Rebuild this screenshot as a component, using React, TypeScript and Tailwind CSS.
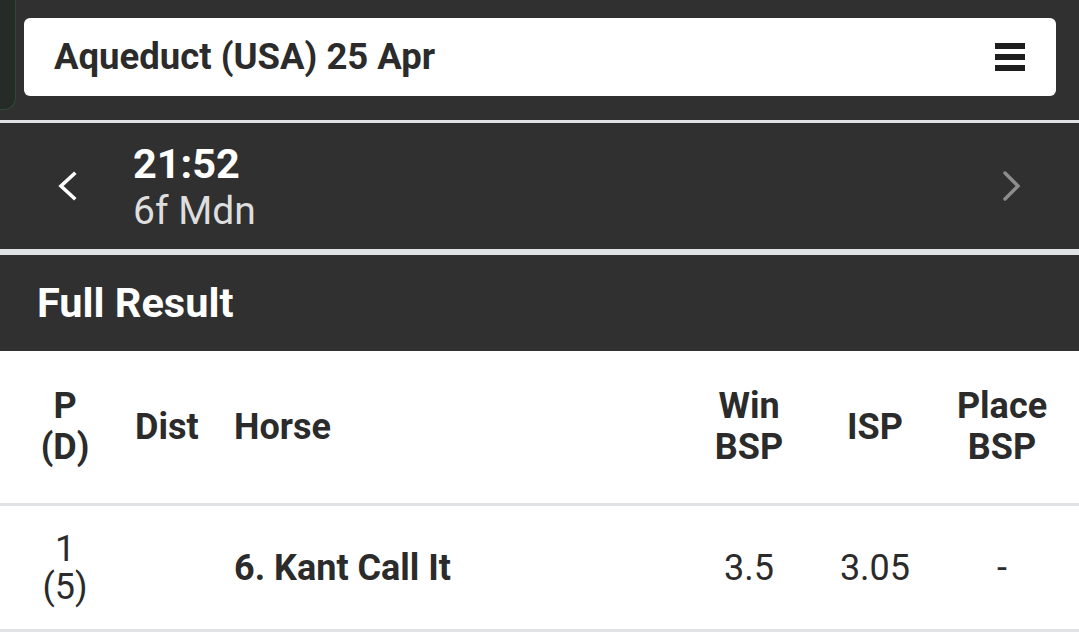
import React from 'react';

const font = { fontFamily: 'Roboto, "Noto Sans", sans-serif' };

const ChevronLeft = () => (
  <svg width="24" height="30" viewBox="0 0 24 30" fill="none">
    <path d="M19 3 L6 15 L19 27" stroke="#ffffff" strokeWidth="3.6" strokeLinecap="square" />
  </svg>
);

const ChevronRight = () => (
  <svg width="22" height="32" viewBox="0 0 22 32" fill="none">
    <path d="M4 3 L17 16 L4 29" stroke="#8d8d8d" strokeWidth="3.4" strokeLinecap="round" />
  </svg>
);

const Hamburger = () => (
  <div className="flex flex-col gap-[5.5px] w-[30px]">
    <span className="block h-[5.5px] bg-[#1e1e1e]" />
    <span className="block h-[5.5px] bg-[#1e1e1e]" />
    <span className="block h-[5.5px] bg-[#1e1e1e]" />
  </div>
);

const App = () => {
  return (
    <div className="w-[1079px] h-[635px] overflow-hidden bg-white text-[#2b2b2b]" style={font}>
      {/* venue bar */}
      <div className="flex items-start h-[120px] bg-[#303030]">
        <div className="w-[16px] h-[110px] shrink-0 bg-[#262b27] border-r-[1.5px] border-b-[1.5px] border-[#2f4a33] rounded-br-[12px]" />
        <div className="flex-1 ml-[8px] mr-[23px] mt-[18px] h-[78px] bg-white rounded-[6px] flex items-center justify-between pl-[30px] pr-[31px]">
          <span className="text-[36.5px] font-bold text-[#2b2b2b]">Aqueduct (USA) 25 Apr</span>
          <Hamburger />
        </div>
      </div>
      <div className="h-[3px] bg-[#dfe3e6]" />

      {/* race selector */}
      <div className="h-[126px] bg-[#303030] flex items-center pl-[55px] pr-[56px]">
        <ChevronLeft />
        <div className="ml-[54px] flex flex-col mt-[1px]">
          <span className="text-[41.5px] leading-[48px] font-bold text-white">21:52</span>
          <span className="text-[39px] leading-[46px] text-[#dedede]">6f Mdn</span>
        </div>
        <div className="ml-auto">
          <ChevronRight />
        </div>
      </div>
      <div className="h-[6px] bg-[#dfe3e6]" />

      {/* section title */}
      <div className="h-[96px] bg-[#303030] flex items-center pl-[37px]">
        <span className="text-[41.5px] font-bold text-white">Full Result</span>
      </div>

      {/* results table */}
      <div className="grid grid-cols-[130px_99px_457px_126px_126px_128px] pr-[13px] text-[36px] font-bold leading-[41px]">
        <div className="h-[152px] flex items-center justify-center text-center">P<br />(D)</div>
        <div className="h-[152px] flex items-center pl-[5px]">Dist</div>
        <div className="h-[152px] flex items-center pl-[5px]">Horse</div>
        <div className="h-[152px] flex items-center justify-center text-center">Win<br />BSP</div>
        <div className="h-[152px] flex items-center justify-center text-center">ISP</div>
        <div className="h-[152px] flex items-center justify-center text-center">Place<br />BSP</div>
      </div>
      <div className="h-[3px] bg-[#dfe3e6]" />
      <div className="grid grid-cols-[130px_99px_457px_126px_126px_128px] pr-[13px] text-[36px] leading-[38px] font-normal">
        <div className="h-[123px] flex items-center justify-center text-center">1<br />(5)</div>
        <div className="h-[123px]" />
        <div className="h-[123px] flex items-center pl-[5px] font-bold">6. Kant Call It</div>
        <div className="h-[123px] flex items-center justify-center">3.5</div>
        <div className="h-[123px] flex items-center justify-center">3.05</div>
        <div className="h-[123px] flex items-center justify-center">-</div>
      </div>
      <div className="h-[3px] bg-[#dfe3e6]" />
    </div>
  );
};

export default App;
